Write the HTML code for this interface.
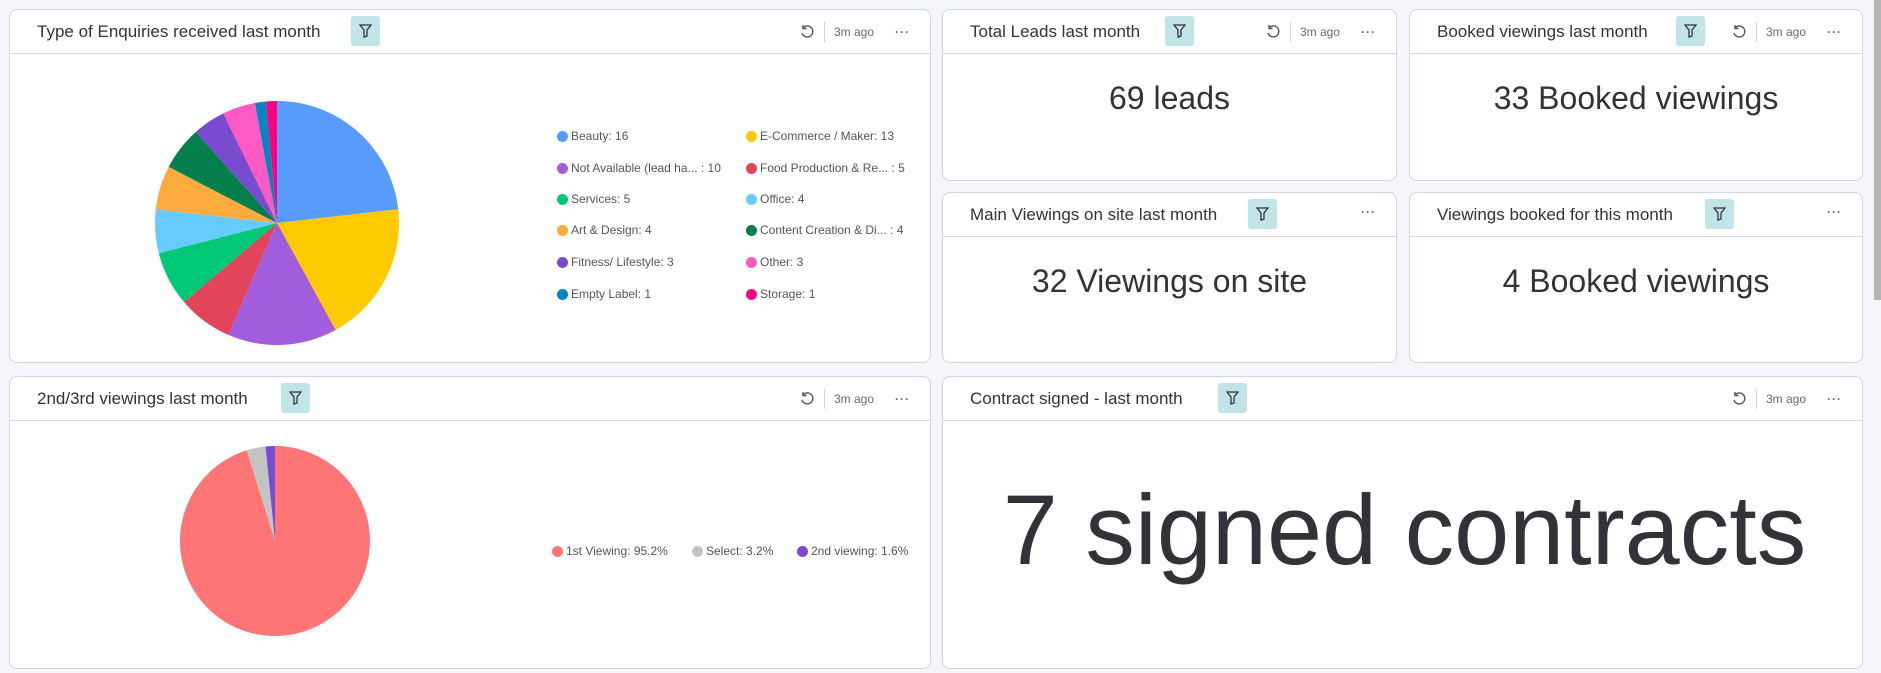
<!DOCTYPE html>
<html><head><meta charset="utf-8"><style>
*{box-sizing:border-box;margin:0;padding:0}
body{width:1881px;height:673px;background:#f5f6fa;font-family:"Liberation Sans",sans-serif;color:#323338;position:relative;overflow:hidden}
.card{position:absolute;background:#fff;border:1px solid #d0d4e4;border-radius:8px}
.hd{position:absolute;left:0;right:0;top:0;height:44px;border-bottom:1px solid #d0d4e4}
.t{position:absolute;left:27px;top:12px;font-size:17px;white-space:nowrap}
.f{position:absolute;top:6px;width:29px;height:30px;background:#c1e4e9;border-radius:3px}
.f svg{position:absolute;left:8px;top:8px}
.r{position:absolute;right:20px;top:12px;font-size:12px;color:#676879;display:flex;align-items:center;gap:9px}
.sep{width:1px;height:20px;background:#d0d4e4}
.big{position:absolute;left:0;right:0;text-align:center;font-size:32px;color:#323338}
.lg{position:absolute;font-size:12px;color:#555;white-space:nowrap}
.lg i{position:absolute;left:-14px;top:2px;width:11px;height:11px;border-radius:50%}
</style></head><body>
<!-- card 1 -->
<div class="card" style="left:9px;top:9px;width:922px;height:354px">
<div class="hd"><div class="t">Type of Enquiries received last month</div>
<div class="f" style="left:341px"><svg width="13" height="14" viewBox="0 0 13 14"><path d="M1 1h11L8 6v6L5 13V6z" fill="none" stroke="#323338" stroke-width="1.3"/></svg></div>
<div class="r"><svg width="16" height="16" viewBox="0 0 16 16"><path d="M4 4A5.5 5.5 0 1 1 3 9M4 1v3.5h3.5" fill="none" stroke="#555" stroke-width="1.4"/></svg><span class="sep"></span><span>3m ago</span><span style="font-weight:bold;margin-left:12px;letter-spacing:1px">···</span></div></div>
</div>
<svg style="position:absolute;left:0;top:0" width="940" height="370">
<path d="M277 223L277 101A122 122 0 0 1 398.2 209.2Z" fill="#579bfc"/>
<path d="M277 223L398.2 209.2A122 122 0 0 1 335.6 330Z" fill="#ffcb00"/>
<path d="M277 223L335.6 330A122 122 0 0 1 228.4 334.9Z" fill="#a25ddc"/>
<path d="M277 223L228.4 334.9A122 122 0 0 1 184.1 302.1Z" fill="#e2445c"/>
<path d="M277 223L184.1 302.1A122 122 0 0 1 158.8 253.2Z" fill="#00c875"/>
<path d="M277 223L158.8 253.2A122 122 0 0 1 155.8 209.2Z" fill="#66ccff"/>
<path d="M277 223L155.8 209.2A122 122 0 0 1 168.7 166.9Z" fill="#fdab3d"/>
<path d="M277 223L168.7 166.9A122 122 0 0 1 195.8 132Z" fill="#037f4c"/>
<path d="M277 223L195.8 132A122 122 0 0 1 223.3 113.4Z" fill="#784bd1"/>
<path d="M277 223L223.3 113.4A122 122 0 0 1 254.9 103Z" fill="#ff5ac4"/>
<path d="M277 223L254.9 103A122 122 0 0 1 265.9 101.5Z" fill="#0086c0"/>
<path d="M277 223L265.9 101.5A122 122 0 0 1 277 101Z" fill="#ff0080"/>
</svg>
<div class="lg" style="left:571px;top:129px"><i style="background:#579bfc"></i>Beauty: 16</div>
<div class="lg" style="left:760px;top:129px"><i style="background:#ffcb00"></i>E-Commerce / Maker: 13</div>
<div class="lg" style="left:571px;top:161px"><i style="background:#a25ddc"></i>Not Available (lead ha... : 10</div>
<div class="lg" style="left:760px;top:161px"><i style="background:#e2445c"></i>Food Production &amp; Re... : 5</div>
<div class="lg" style="left:571px;top:192px"><i style="background:#00c875"></i>Services: 5</div>
<div class="lg" style="left:760px;top:192px"><i style="background:#66ccff"></i>Office: 4</div>
<div class="lg" style="left:571px;top:223px"><i style="background:#fdab3d"></i>Art &amp; Design: 4</div>
<div class="lg" style="left:760px;top:223px"><i style="background:#037f4c"></i>Content Creation &amp; Di... : 4</div>
<div class="lg" style="left:571px;top:255px"><i style="background:#784bd1"></i>Fitness/ Lifestyle: 3</div>
<div class="lg" style="left:760px;top:255px"><i style="background:#ff5ac4"></i>Other: 3</div>
<div class="lg" style="left:571px;top:287px"><i style="background:#0086c0"></i>Empty Label: 1</div>
<div class="lg" style="left:760px;top:287px"><i style="background:#ff0080"></i>Storage: 1</div>

<!-- small cards -->
<div class="card" style="left:942px;top:9px;width:455px;height:172px">
<div class="hd"><div class="t">Total Leads last month</div>
<div class="f" style="left:222px"><svg width="13" height="14" viewBox="0 0 13 14"><path d="M1 1h11L8 6v6L5 13V6z" fill="none" stroke="#323338" stroke-width="1.3"/></svg></div>
<div class="r"><svg width="16" height="16" viewBox="0 0 16 16"><path d="M4 4A5.5 5.5 0 1 1 3 9M4 1v3.5h3.5" fill="none" stroke="#555" stroke-width="1.4"/></svg><span class="sep"></span><span>3m ago</span><span style="font-weight:bold;margin-left:12px;letter-spacing:1px">···</span></div></div>
<div class="big" style="top:70px">69 leads</div></div>

<div class="card" style="left:1409px;top:9px;width:454px;height:172px">
<div class="hd"><div class="t">Booked viewings last month</div>
<div class="f" style="left:266px"><svg width="13" height="14" viewBox="0 0 13 14"><path d="M1 1h11L8 6v6L5 13V6z" fill="none" stroke="#323338" stroke-width="1.3"/></svg></div>
<div class="r"><svg width="16" height="16" viewBox="0 0 16 16"><path d="M4 4A5.5 5.5 0 1 1 3 9M4 1v3.5h3.5" fill="none" stroke="#555" stroke-width="1.4"/></svg><span class="sep"></span><span>3m ago</span><span style="font-weight:bold;margin-left:12px;letter-spacing:1px">···</span></div></div>
<div class="big" style="top:70px">33 Booked viewings</div></div>

<div class="card" style="left:942px;top:192px;width:455px;height:171px">
<div class="hd"><div class="t">Main Viewings on site last month</div>
<div class="f" style="left:305px"><svg width="13" height="14" viewBox="0 0 13 14"><path d="M1 1h11L8 6v6L5 13V6z" fill="none" stroke="#323338" stroke-width="1.3"/></svg></div>
<div class="r"><span style="font-weight:bold;letter-spacing:1px">···</span></div></div>
<div class="big" style="top:70px">32 Viewings on site</div></div>

<div class="card" style="left:1409px;top:192px;width:454px;height:171px">
<div class="hd"><div class="t">Viewings booked for this month</div>
<div class="f" style="left:295px"><svg width="13" height="14" viewBox="0 0 13 14"><path d="M1 1h11L8 6v6L5 13V6z" fill="none" stroke="#323338" stroke-width="1.3"/></svg></div>
<div class="r"><span style="font-weight:bold;letter-spacing:1px">···</span></div></div>
<div class="big" style="top:70px">4 Booked viewings</div></div>

<!-- bottom left -->
<div class="card" style="left:9px;top:376px;width:922px;height:293px">
<div class="hd"><div class="t">2nd/3rd viewings last month</div>
<div class="f" style="left:271px"><svg width="13" height="14" viewBox="0 0 13 14"><path d="M1 1h11L8 6v6L5 13V6z" fill="none" stroke="#323338" stroke-width="1.3"/></svg></div>
<div class="r"><svg width="16" height="16" viewBox="0 0 16 16"><path d="M4 4A5.5 5.5 0 1 1 3 9M4 1v3.5h3.5" fill="none" stroke="#555" stroke-width="1.4"/></svg><span class="sep"></span><span>3m ago</span><span style="font-weight:bold;margin-left:12px;letter-spacing:1px">···</span></div></div>
</div>
<svg style="position:absolute;left:0;top:400px" width="400" height="273" viewBox="0 400 400 273">
<path d="M275 541L275 446A95 95 0 1 1 246.7 450.3Z" fill="#ff7575"/>
<path d="M275 541L246.7 450.3A95 95 0 0 1 265.5 446.5Z" fill="#c4c4c4"/>
<path d="M275 541L265.5 446.5A95 95 0 0 1 275 446Z" fill="#784bd1"/>
</svg>
<div class="lg" style="left:566px;top:544px"><i style="background:#ff7575"></i>1st Viewing: 95.2%</div>
<div class="lg" style="left:706px;top:544px"><i style="background:#c4c4c4"></i>Select: 3.2%</div>
<div class="lg" style="left:811px;top:544px"><i style="background:#784bd1"></i>2nd viewing: 1.6%</div>

<!-- bottom right -->
<div class="card" style="left:942px;top:376px;width:921px;height:293px">
<div class="hd"><div class="t">Contract signed - last month</div>
<div class="f" style="left:275px"><svg width="13" height="14" viewBox="0 0 13 14"><path d="M1 1h11L8 6v6L5 13V6z" fill="none" stroke="#323338" stroke-width="1.3"/></svg></div>
<div class="r"><svg width="16" height="16" viewBox="0 0 16 16"><path d="M4 4A5.5 5.5 0 1 1 3 9M4 1v3.5h3.5" fill="none" stroke="#555" stroke-width="1.4"/></svg><span class="sep"></span><span>3m ago</span><span style="font-weight:bold;margin-left:12px;letter-spacing:1px">···</span></div></div>
<div class="big" style="top:96px;font-size:99px;left:4px">7 signed contracts</div></div>

<div style="position:absolute;left:1874px;top:0;width:7px;height:300px;background:#b5b5b5"></div>
</body></html>
